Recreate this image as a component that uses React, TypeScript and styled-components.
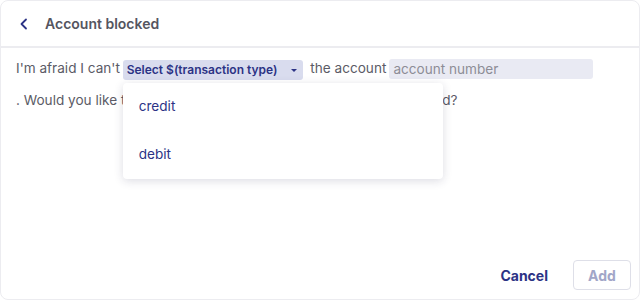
import React from "react";
import styled, { createGlobalStyle } from "styled-components";

const GlobalStyle = createGlobalStyle`
	body {
		margin: 0;
		background: #ffffff;
		font-family: Inter, "Noto Sans", sans-serif;
	}
`;

const navy = "#2c3385";
const text = "#5b5b66";

const Card = styled.div`
	width: 640px;
	height: 300px;
	box-sizing: border-box;
	border: 1px solid #ececf0;
	border-radius: 8px;
	display: flex;
	flex-direction: column;
	background: #fff;
	overflow: hidden;
`;

const Header = styled.header`
	display: flex;
	align-items: center;
	height: 45px;
	padding: 0 0 0 18px;
	gap: 16px;
	border-bottom: 2px solid #ececf0;
	box-sizing: content-box;
	flex-shrink: 0;
`;

const BackButton = styled.button`
	border: none;
	background: none;
	padding: 0;
	display: flex;
	align-items: center;
	cursor: pointer;
`;

const Title = styled.h1`
	margin: 0;
	font-size: 14px;
	font-weight: 600;
	color: #55555f;
`;

const Body = styled.div`
	flex: 1;
	padding: 4px 16px 0 15px;
	font-size: 13.6px;
	line-height: 32px;
	color: ${text};
`;

const Line = styled.div`
	white-space: nowrap;
`;

const SelectWrap = styled.span`
	position: relative;
	display: inline-block;
	vertical-align: middle;
	margin: 0 3px 0 -1px;
	line-height: 20px;
`;

const SelectPill = styled.span`
	display: inline-flex;
	align-items: center;
	gap: 14px;
	height: 20px;
	padding: 0 6px 0 4px;
	border-radius: 3px;
	background: #d9dcee;
	color: ${navy};
	font-size: 12px;
	font-weight: 600;
`;

const Caret = styled.span`
	width: 0;
	height: 0;
	border-left: 3px solid transparent;
	border-right: 3px solid transparent;
	border-top: 3px solid ${navy};
	margin-top: 2px;
`;

const Field = styled.span<{ $width: number }>`
	display: inline-block;
	vertical-align: middle;
	width: ${(p) => p.$width}px;
	height: 20px;
	line-height: 20px;
	padding: 0 4px;
	box-sizing: border-box;
	border-radius: 3px;
	background: #e9eaf3;
	color: #8d8d96;
	font-size: 13.6px;
	margin-left: 3px;
`;

const Menu = styled.ul`
	position: absolute;
	top: 24px;
	left: 0;
	width: 320px;
	margin: 0;
	padding: 0;
	list-style: none;
	background: #fff;
	border-radius: 4px;
	box-shadow: 0 2px 10px rgba(40, 40, 80, 0.16);
	z-index: 2;
`;

const MenuItem = styled.li`
	height: 48px;
	line-height: 46px;
	padding: 0 16px;
	font-size: 13.6px;
	color: ${navy};
	font-weight: 400;
`;

const Footer = styled.footer`
	display: flex;
	justify-content: flex-end;
	align-items: center;
	gap: 13px;
	padding: 0 8px 9px 0;
`;

const TextButton = styled.button`
	border: none;
	background: none;
	font-family: inherit;
	font-size: 14px;
	font-weight: 700;
	color: ${navy};
	padding: 0 12px;
	height: 30px;
	cursor: pointer;
`;

const OutlineButton = styled.button`
	width: 58px;
	height: 30px;
	border: 1px solid #dedfe8;
	border-radius: 4px;
	background: #fff;
	font-family: inherit;
	font-size: 14px;
	font-weight: 700;
	color: #a2a6c8;
`;

const App = () => {
	return (
		<>
			<GlobalStyle />
			<Card>
				<Header>
					<BackButton aria-label="Back">
						<svg width="10" height="12" viewBox="0 0 10 12">
							<path
								d="M7 1.5L2.5 6L7 10.5"
								fill="none"
								stroke={navy}
								strokeWidth="1.8"
								strokeLinecap="round"
								strokeLinejoin="round"
							/>
						</svg>
					</BackButton>
					<Title>Account blocked</Title>
				</Header>

				<Body>
					<Line>
						I'm afraid I can't{" "}
						<SelectWrap>
							<SelectPill>
								Select $(transaction type)
								<Caret />
							</SelectPill>
							<Menu>
								{["credit", "debit"].map((item) => (
									<MenuItem key={item}>{item}</MenuItem>
								))}
							</Menu>
						</SelectWrap>{" "}
						the account
						<Field $width={204}>account number</Field>
					</Line>
					<Line>
						. Would you like to<Field $width={137}></Field> and have it then unblocked?
					</Line>
				</Body>

				<Footer>
					<TextButton>Cancel</TextButton>
					<OutlineButton disabled>Add</OutlineButton>
				</Footer>
			</Card>
		</>
	);
};

export default App;
